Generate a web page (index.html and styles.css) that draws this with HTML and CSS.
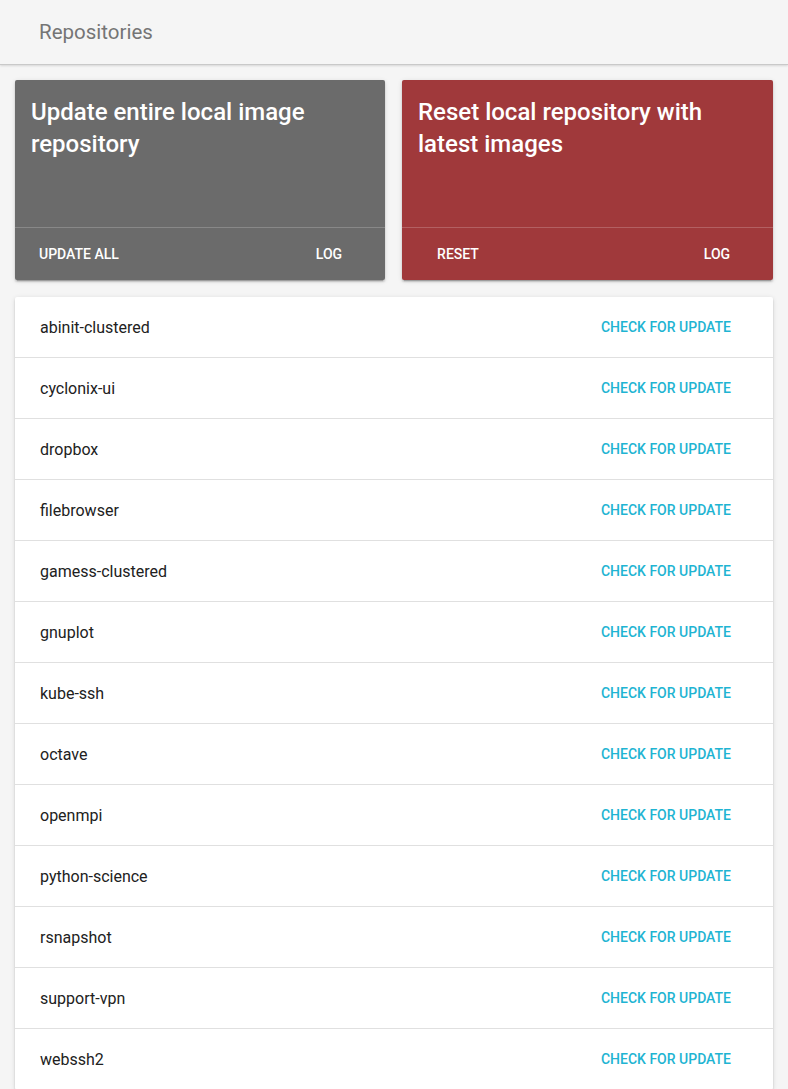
FILE: index.html
```html
<!DOCTYPE html>
<html>
<head>
<meta charset="utf-8">
<link rel="stylesheet" href="styles.css">
</head>
<body>
<header class="topbar"><span class="topbar-title">Repositories</span></header>
<main class="content">
  <div class="cards">
    <section class="card card-gray">
      <div class="card-title">Update entire local image repository</div>
      <div class="card-actions">
        <button class="btn">Update all</button>
        <button class="btn">Log</button>
      </div>
    </section>
    <section class="card card-red">
      <div class="card-title">Reset local repository with latest images</div>
      <div class="card-actions">
        <button class="btn">Reset</button>
        <button class="btn">Log</button>
      </div>
    </section>
  </div>
  <ul class="repo-list">
    <li class="repo"><span class="repo-name">abinit-clustered</span><button class="check">Check for update</button></li>
    <li class="repo"><span class="repo-name">cyclonix-ui</span><button class="check">Check for update</button></li>
    <li class="repo"><span class="repo-name">dropbox</span><button class="check">Check for update</button></li>
    <li class="repo"><span class="repo-name">filebrowser</span><button class="check">Check for update</button></li>
    <li class="repo"><span class="repo-name">gamess-clustered</span><button class="check">Check for update</button></li>
    <li class="repo"><span class="repo-name">gnuplot</span><button class="check">Check for update</button></li>
    <li class="repo"><span class="repo-name">kube-ssh</span><button class="check">Check for update</button></li>
    <li class="repo"><span class="repo-name">octave</span><button class="check">Check for update</button></li>
    <li class="repo"><span class="repo-name">openmpi</span><button class="check">Check for update</button></li>
    <li class="repo"><span class="repo-name">python-science</span><button class="check">Check for update</button></li>
    <li class="repo"><span class="repo-name">rsnapshot</span><button class="check">Check for update</button></li>
    <li class="repo"><span class="repo-name">support-vpn</span><button class="check">Check for update</button></li>
    <li class="repo"><span class="repo-name">webssh2</span><button class="check">Check for update</button></li>
  </ul>
</main>
</body>
</html>
```

FILE: styles.css
```css
* { box-sizing: border-box; }
html, body {
  margin: 0;
  padding: 0;
  background: #f5f5f5;
  font-family: Roboto, "Liberation Sans", sans-serif;
}
.topbar {
  height: 65px;
  background: #f5f5f5;
  display: flex;
  align-items: center;
  padding-left: 39px;
  padding-bottom: 1px;
  border-bottom: 1px solid #c9c9c9;
  box-shadow: 0 1px 2px rgba(0,0,0,0.12);
}
.topbar-title {
  font-size: 20.5px;
  color: #757575;
  font-weight: 400;
}
.content {
  padding: 15px 15px 0 15px;
}
.cards {
  display: grid;
  grid-template-columns: 370px 371px;
  column-gap: 17px;
}
.card {
  height: 200px;
  border-radius: 2px;
  display: flex;
  flex-direction: column;
  color: #fff;
  box-shadow: 0 2px 2px 0 rgba(0,0,0,.14), 0 3px 1px -2px rgba(0,0,0,.2), 0 1px 5px 0 rgba(0,0,0,.12);
}
.card-gray { background: #6b6b6b; }
.card-red { background: #a0393b; }
.card-title {
  flex: 1;
  padding: 16px 16px 0 16px;
  font-size: 24px;
  line-height: 32px;
  font-weight: 500;
}
.card-actions {
  height: 53px;
  border-top: 1px solid rgba(255,255,255,0.2);
  display: flex;
  align-items: center;
  justify-content: space-between;
  padding: 0 12px;
}
.btn {
  background: none;
  border: 0;
  color: #fff;
  font-family: Roboto, "Liberation Sans", sans-serif;
  font-size: 14px;
  font-weight: 500;
  text-transform: uppercase;
  min-width: 88px;
  height: 36px;
  padding: 0 12px;
  text-align: center;
}
.repo-list {
  list-style: none;
  margin: 17px 0 0 0;
  padding: 0;
  background: #fff;
  border-radius: 2px;
  box-shadow: 0 2px 2px 0 rgba(0,0,0,.14), 0 3px 1px -2px rgba(0,0,0,.2), 0 1px 5px 0 rgba(0,0,0,.12);
}
.repo {
  height: 61px;
  display: flex;
  align-items: center;
  justify-content: space-between;
  padding: 0 26px 0 25px;
  border-bottom: 1px solid #e0e0e0;
}
.repo-name {
  font-size: 16px;
  color: #212121;
}
.check {
  background: none;
  border: 0;
  padding: 0 16px;
  height: 36px;
  color: #1fb4d2;
  font-family: Roboto, "Liberation Sans", sans-serif;
  font-size: 14px;
  font-weight: 500;
  text-transform: uppercase;
}
```
